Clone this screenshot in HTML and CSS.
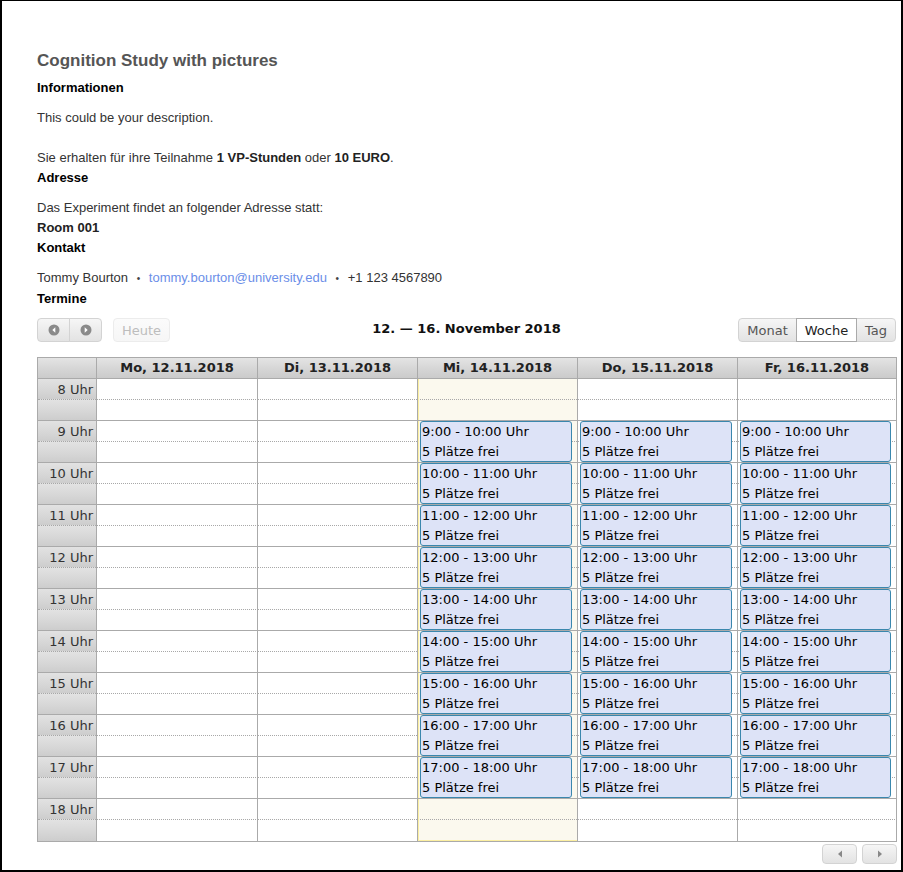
FILE: index.html
```html
<!DOCTYPE html>
<html lang="de">
<head>
<meta charset="utf-8">
<title>Cognition Study with pictures</title>
<link rel="stylesheet" href="styles.css">
</head>
<body>
<div class="frame">
  <h2 class="title">Cognition Study with pictures</h2>
  <h4 class="heading">Informationen</h4>
  <p class="text">This could be your description.<br><br>Sie erhalten für ihre Teilnahme <b>1 VP-Stunden</b> oder <b>10 EURO</b>.</p>
  <h4 class="heading">Adresse</h4>
  <p class="text">Das Experiment findet an folgender Adresse statt:<br><b>Room 001</b></p>
  <h4 class="heading">Kontakt</h4>
  <p class="text">Tommy Bourton <span class="dot">•</span> <a class="mail" href="#">tommy.bourton@university.edu</a> <span class="dot">•</span> +1 123 4567890</p>
  <h4 class="heading">Termine</h4>

  <div class="toolbar">
    <div class="tb-left">
      <div class="btn-group">
        <span class="btn btn-first"><svg width="12" height="12" viewBox="0 0 12 12"><circle cx="6" cy="6" r="5.5" fill="#8a8a8a"/><path d="M7.3 3.3 L4.3 6 L7.3 8.7 Z" fill="#fff"/></svg></span>
        <span class="btn btn-last"><svg width="12" height="12" viewBox="0 0 12 12"><circle cx="6" cy="6" r="5.5" fill="#8a8a8a"/><path d="M4.7 3.3 L7.7 6 L4.7 8.7 Z" fill="#fff"/></svg></span>
      </div>
      <span class="btn btn-single btn-disabled">Heute</span>
    </div>
    <div class="tb-title">12. — 16. November 2018</div>
    <div class="tb-right">
      <div class="btn-group">
        <span class="btn btn-first">Monat</span>
        <span class="btn btn-active">Woche</span>
        <span class="btn btn-last">Tag</span>
      </div>
    </div>
  </div>

  <div class="cal">
    <div class="cal-row cal-head">
      <div class="hcell"></div>
      <div class="hcell">Mo, 12.11.2018</div>
      <div class="hcell">Di, 13.11.2018</div>
      <div class="hcell">Mi, 14.11.2018</div>
      <div class="hcell">Do, 15.11.2018</div>
      <div class="hcell last">Fr, 16.11.2018</div>
    </div>
    <div id="body"></div>
  </div>
  <div class="scroll-btns">
    <span class="sbtn"><svg width="6" height="8" viewBox="0 0 6 8"><path d="M5 0.5 L1 4 L5 7.5 Z" fill="#888"/></svg></span>
    <span class="sbtn"><svg width="6" height="8" viewBox="0 0 6 8"><path d="M1 0.5 L5 4 L1 7.5 Z" fill="#888"/></svg></span>
  </div>
</div>
<script src="app.js"></script>
</body>
</html>
```
FILE: app.js
```js
(function () {
  var body = document.getElementById('body');
  var html = '';
  for (var h = 8; h <= 18; h++) {
    var last = h === 18 ? ' last-row' : '';
    html += '<div class="cal-row hour' + last + '">';
    html += '<div class="tcell"><div class="thalf top">' + h + ' Uhr</div><div class="thalf"></div></div>';
    for (var d = 0; d < 5; d++) {
      var cls = 'dcell';
      if (d === 2) cls += ' today';
      if (d === 4) cls += ' last';
      html += '<div class="' + cls + '">';
      if (d >= 2 && h >= 9 && h <= 17) {
        html += '<div class="event"><div>' + h + ':00 - ' + (h + 1) + ':00 Uhr</div><div>5 Plätze frei</div></div>';
      }
      html += '</div>';
    }
    html += '</div>';
  }
  body.innerHTML = html;
})();
```
FILE: styles.css
```css
html, body {
  margin: 0;
  padding: 0;
  background: #fff;
}
.frame {
  box-sizing: border-box;
  width: 903px;
  height: 872px;
  border: 2px solid #000;
  border-top-width: 1px;
  padding: 48px 5px 0 35px;
  font-family: "Liberation Sans", Arial, sans-serif;
  font-size: 13px;
  color: #333;
  overflow: hidden;
}
.title {
  margin: 0 0 5px 0;
  font-size: 17px;
  line-height: 24px;
  font-weight: bold;
  color: #555;
}
.heading {
  margin: 0;
  font-size: 13px;
  line-height: 20px;
  font-weight: bold;
  color: #000;
}
.text {
  margin: 10px 0 0 0;
  line-height: 20px;
}
.text b {
  color: #222;
}
.dot {
  font-size: 10px;
  margin: 0 5px;
  color: #444;
}
.mail {
  color: #6b8ee8;
  text-decoration: none;
}

/* toolbar */
.toolbar {
  margin-top: 9px;
  display: grid;
  grid-template-columns: 1fr auto 1fr;
  align-items: start;
  font-family: "DejaVu Sans", Verdana, sans-serif;
  font-size: 13px;
}
.tb-left {
  display: flex;
  gap: 11px;
}
.tb-right {
  display: flex;
  justify-content: flex-end;
}
.tb-title {
  font-weight: bold;
  font-size: 13px;
  color: #111;
  line-height: 18px;
  padding-top: 2px;
}
.btn-group {
  display: flex;
}
.btn {
  box-sizing: border-box;
  height: 24px;
  display: flex;
  align-items: center;
  justify-content: center;
  padding: 0 7px;
  border: 1px solid #d3d3d3;
  background: linear-gradient(#f6f6f6, #ececec 50%, #e3e3e3);
  color: #555;
  font-size: 13px;
}
.btn-group .btn + .btn {
  margin-left: -1px;
}
.btn svg {
  display: block;
}
.tb-left .btn-group .btn {
  width: 33px;
  padding: 0;
}
.btn-first {
  border-radius: 4px 0 0 4px;
}
.btn-last {
  border-radius: 0 4px 4px 0;
}
.btn-single {
  border-radius: 4px;
  width: 57px;
}
.btn-disabled {
  color: #bdbdbd;
  border-color: #ececec;
  background: linear-gradient(#fbfbfb, #f6f6f6);
}
.btn-active {
  background: #fff;
  border-color: #aaa;
  color: #222;
  position: relative;
  z-index: 1;
  width: 61px;
}
.tb-right .btn-first { width: 59px; }
.tb-right .btn-last { width: 40px; }

/* calendar */
.cal {
  margin-top: 15px;
  width: 860px;
  box-sizing: border-box;
  border: 1px solid #aaa;
  font-family: "DejaVu Sans", Verdana, sans-serif;
  font-size: 13px;
}
.cal-row {
  display: grid;
  grid-template-columns: 59px 161px 160px 160px 160px 1fr;
}
.hcell {
  box-sizing: border-box;
  height: 21px;
  line-height: 20px;
  border-right: 1px solid #aaa;
  border-bottom: 1px solid #aaa;
  background: linear-gradient(#e4e4e4, #d4d4d4 60%, #cbcbcb);
  text-align: center;
  font-weight: bold;
  color: #222;
}
.hcell.last,
.dcell.last {
  border-right: none;
}
.hour {
  height: 42px;
}
.tcell {
  box-sizing: border-box;
  border-right: 1px solid #aaa;
  display: flex;
  flex-direction: column;
}
.thalf {
  box-sizing: border-box;
  height: 21px;
  border-bottom: 1px solid #aaa;
  background: linear-gradient(#e2e2e2, #d6d6d6 60%, #cdcdcd);
  text-align: right;
  padding-right: 3px;
  line-height: 21px;
  color: #333;
}
.thalf.top {
  border-bottom: 1px dotted #a8a8a8;
}
.last-row .thalf:last-child {
  border-bottom: none;
}
.dcell {
  box-sizing: border-box;
  border-right: 1px solid #aaa;
  border-bottom: 1px solid #aaa;
  background:
    linear-gradient(to right, #a8a8a8 50%, transparent 50%) 0 20px / 2px 1px repeat-x;
  padding: 0 5px 0 2px;
}
.dcell.today {
  background:
    linear-gradient(to right, #a8a8a8 50%, transparent 50%) 0 20px / 2px 1px repeat-x,
    #fbf9ee;
  box-shadow: inset 1px 0 0 #fcefa1;
}
.last-row .dcell {
  border-bottom: none;
}
.last-row .dcell.today {
  box-shadow: inset 1px 0 0 #fcefa1, inset 0 -1px 0 #fcefa1;
}
.event {
  box-sizing: border-box;
  height: 41px;
  border: 1px solid #3a87ad;
  border-radius: 3px;
  background: #dde3f7;
  color: #000;
  line-height: 20px;
  padding-left: 1px;
  white-space: nowrap;
  overflow: hidden;
}

.scroll-btns {
  width: 860px;
  display: flex;
  justify-content: flex-end;
  gap: 5px;
  margin-top: 2px;
}
.sbtn {
  box-sizing: border-box;
  width: 35px;
  height: 20px;
  border: 1px solid #d3d3d3;
  border-radius: 4px;
  background: linear-gradient(#f6f6f6, #ececec 50%, #e3e3e3);
  display: flex;
  align-items: center;
  justify-content: center;
}
```
